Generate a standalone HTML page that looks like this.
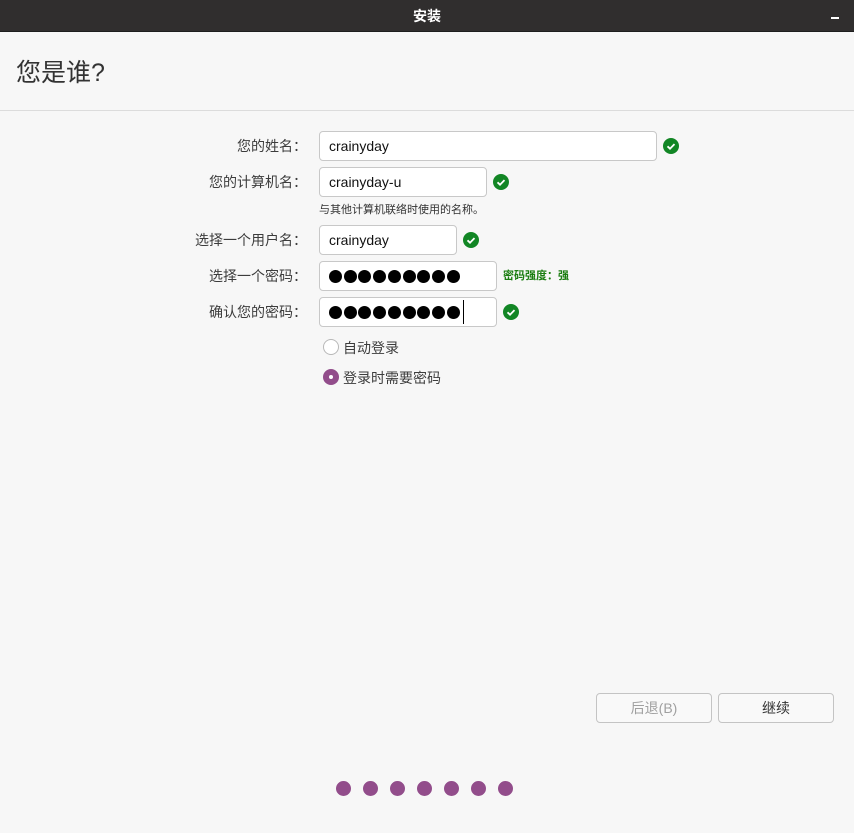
<!DOCTYPE html>
<html><head><meta charset="utf-8"><style>
*{margin:0;padding:0;box-sizing:border-box}
body{width:854px;height:833px;background:#f7f7f7;position:relative;overflow:hidden;font-family:"Liberation Sans","Noto Sans CJK SC",sans-serif;color:#3c3c3c}
.a{position:absolute}
.bar{left:0;top:0;width:854px;height:32px;background:#302e2e;border-bottom:1px solid #1e1e1e}
.lbl{right:547px;font-size:14px;text-align:right;white-space:nowrap;line-height:16px}
.in{background:#fff;border:1px solid #c8c8c8;border-radius:4px;height:30px;font-size:14px;line-height:28px;padding-left:9px;color:#111}
.ck{width:16px;height:16px;border-radius:50%;background:#128625}
.ck svg{position:absolute;left:0;top:0}
.dot{width:13px;height:13px;border-radius:50%;background:#000;top:8px}
.pd{width:15px;height:15px;border-radius:50%;background:#924d8b;top:781px}
.btn{top:693px;height:30px;width:116px;border:1px solid #c4c4c4;border-radius:4px;background:#f9f9f9;font-size:14px;text-align:center;line-height:28px}
</style></head><body>
<div class="a bar"></div>
<div class="a" style="left:0;width:854px;top:7px;text-align:center;color:#fff;font-weight:bold;font-size:14px;line-height:18px">安装</div>
<div class="a" style="left:831px;top:17px;width:8px;height:1.5px;background:#fff"></div>
<div class="a" style="left:16px;top:57px;font-size:25px;line-height:32px;color:#333">您是谁?</div>
<div class="a" style="left:0;top:110px;width:854px;height:1px;background:#dcdcdc"></div>

<div class="a lbl" style="top:138px">您的姓名：</div>
<div class="a lbl" style="top:174px">您的计算机名：</div>
<div class="a lbl" style="top:232px">选择一个用户名：</div>
<div class="a lbl" style="top:268px">选择一个密码：</div>
<div class="a lbl" style="top:304px">确认您的密码：</div>

<div class="a in" style="left:319px;top:131px;width:338px">crainyday</div>
<div class="a in" style="left:319px;top:167px;width:168px">crainyday-u</div>
<div class="a" style="left:319px;top:203px;font-size:11px;line-height:14px;color:#333">与其他计算机联络时使用的名称。</div>
<div class="a in" style="left:319px;top:225px;width:138px">crainyday</div>
<div class="a in" style="left:319px;top:261px;width:178px" id="p1"></div>
<div class="a in" style="left:319px;top:297px;width:178px" id="p2"></div>
<div class="a" style="left:463px;top:300px;width:1px;height:24px;background:#000"></div>
<div class="a" style="left:503px;top:269px;font-size:11px;font-weight:bold;color:#1a7d10;line-height:14px">密码强度：强</div>

<div class="a ck" style="left:663px;top:138px"><svg width="16" height="16"><path d="M4.5 8.3l2.5 2.4 4.5-4.6" stroke="#fff" stroke-width="1.8" fill="none"/></svg></div>
<div class="a ck" style="left:493px;top:174px"><svg width="16" height="16"><path d="M4.5 8.3l2.5 2.4 4.5-4.6" stroke="#fff" stroke-width="1.8" fill="none"/></svg></div>
<div class="a ck" style="left:463px;top:232px"><svg width="16" height="16"><path d="M4.5 8.3l2.5 2.4 4.5-4.6" stroke="#fff" stroke-width="1.8" fill="none"/></svg></div>
<div class="a ck" style="left:503px;top:304px"><svg width="16" height="16"><path d="M4.5 8.3l2.5 2.4 4.5-4.6" stroke="#fff" stroke-width="1.8" fill="none"/></svg></div>

<div class="a" style="left:323px;top:339px;width:16px;height:16px;border-radius:50%;border:1px solid #b8b8b8;background:#fff"></div>
<div class="a" style="left:343px;top:339px;font-size:14px;line-height:18px">自动登录</div>
<div class="a" style="left:323px;top:369px;width:16px;height:16px;border-radius:50%;background:#924d8b"></div>
<div class="a" style="left:329px;top:375px;width:4px;height:4px;border-radius:50%;background:#fff"></div>
<div class="a" style="left:343px;top:369px;font-size:14px;line-height:18px">登录时需要密码</div>

<div class="a btn" style="left:596px;color:#a0a0a0">后退(B)</div>
<div class="a btn" style="left:718px;color:#333">继续</div>

<div class="a pd" style="left:336px"></div><div class="a pd" style="left:363px"></div><div class="a pd" style="left:390px"></div><div class="a pd" style="left:417px"></div><div class="a pd" style="left:444px"></div><div class="a pd" style="left:471px"></div><div class="a pd" style="left:498px"></div>
<script>
['p1','p2'].forEach(function(id){var e=document.getElementById(id);for(var i=0;i<9;i++){var d=document.createElement('div');d.className='a dot';d.style.left=(9+i*14.7)+'px';e.appendChild(d);}});
</script>
</body></html>
